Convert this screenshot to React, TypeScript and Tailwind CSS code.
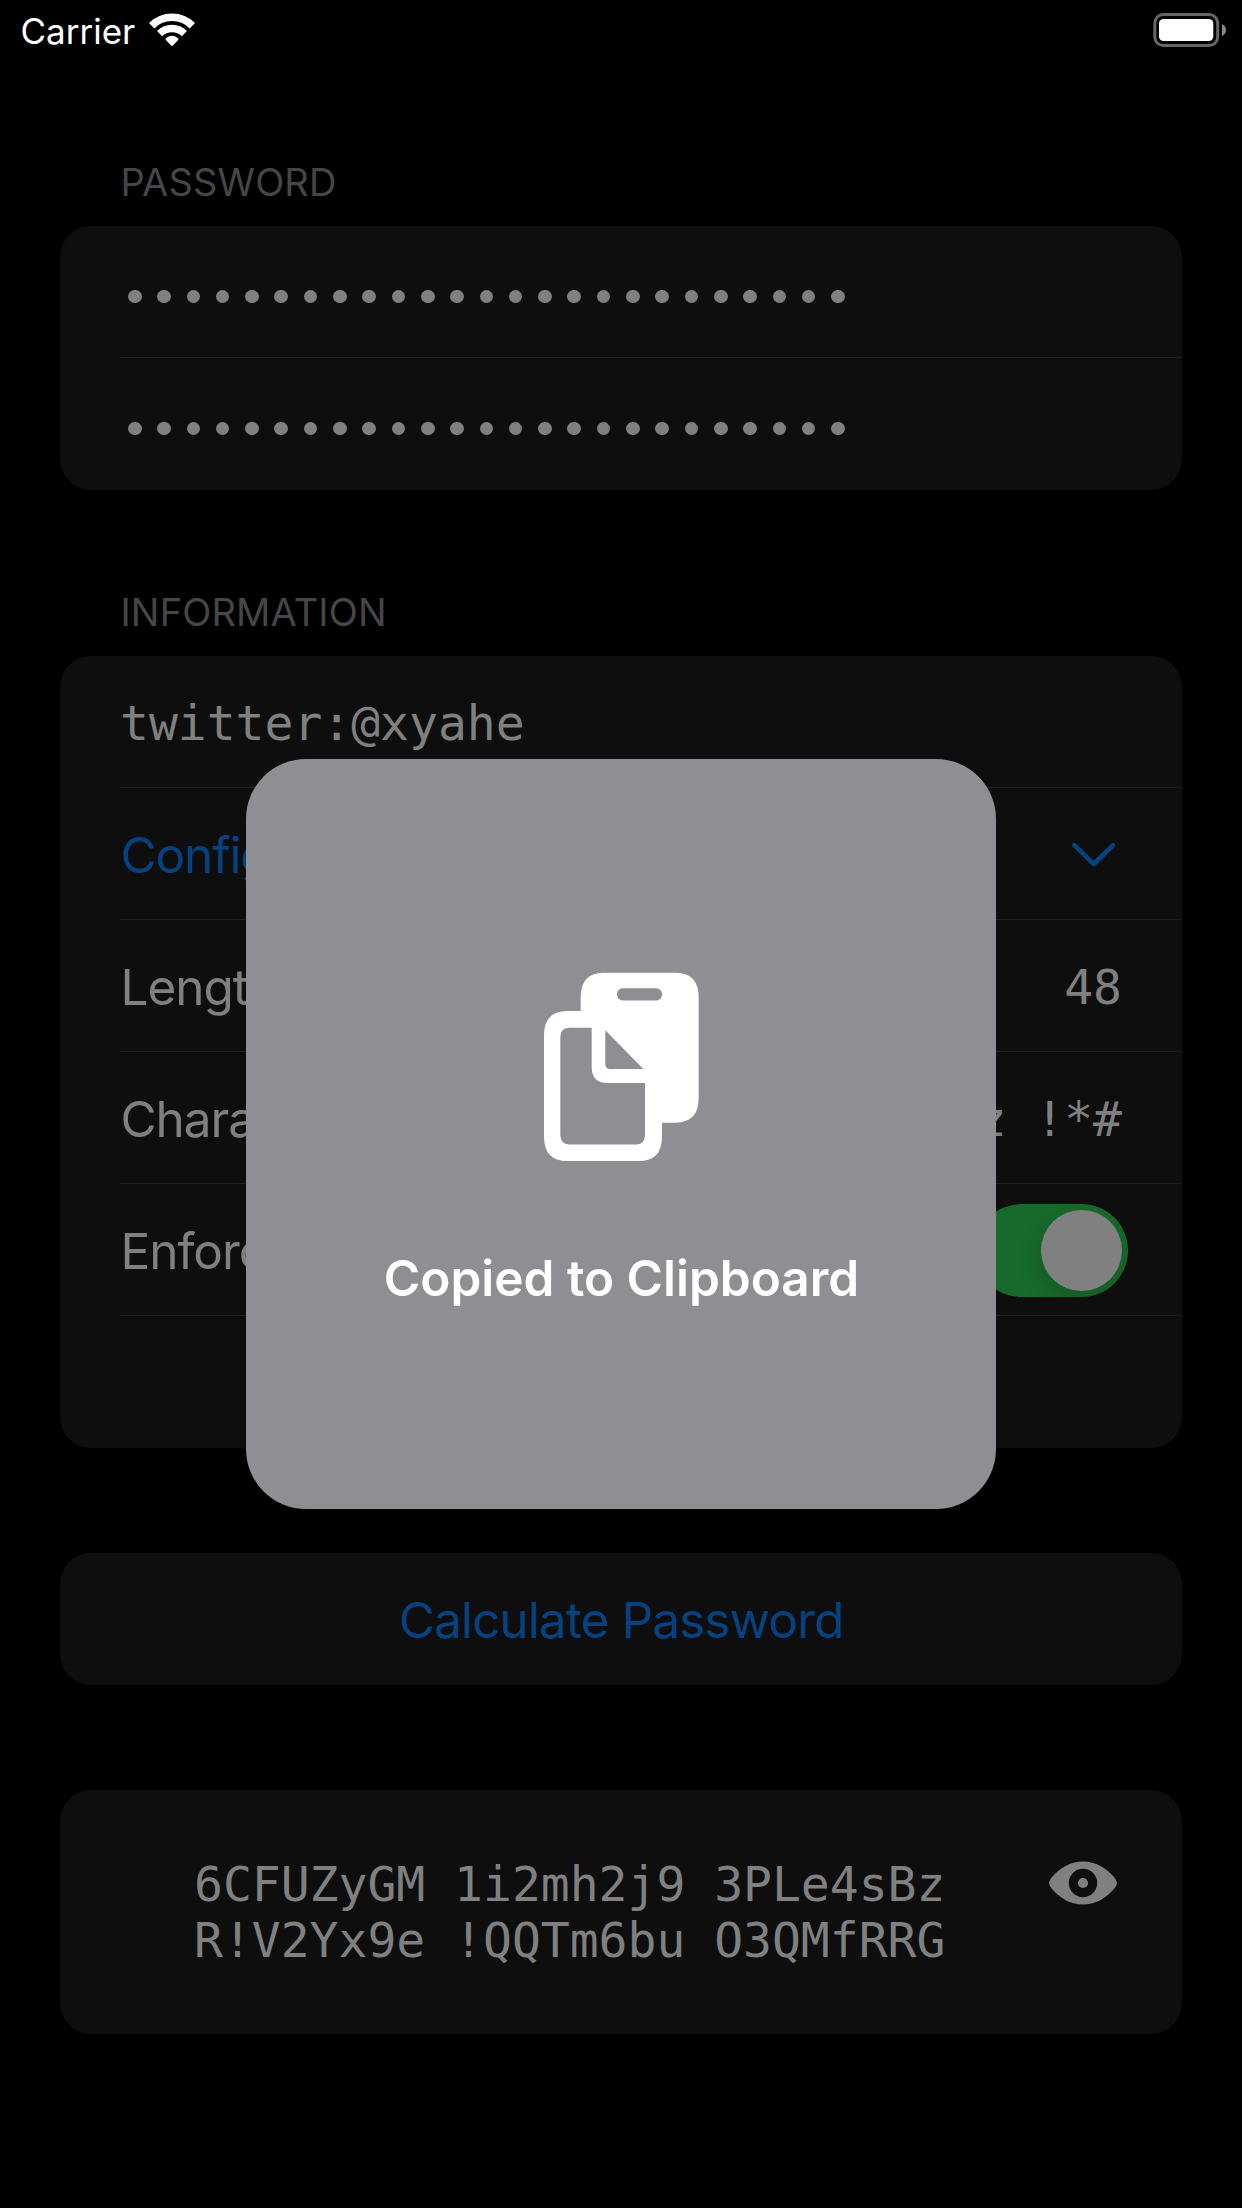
import type { ReactNode } from "react";

const DOTS = Array.from({ length: 25 }, (_, i) => i);

function StatusBar() {
  return (
    <header className="flex h-[60px] items-start justify-between pl-[20.500px] pr-4">
      <div className="flex items-start">
        <span className="mt-2.5 text-[35px] leading-[42px] text-white">Carrier</span>
        <svg className="ml-[12.800px] mt-[12px]" width="48" height="36" viewBox="444 36 144 108">
          <g fill="none" stroke="#fff">
            <path d="M455 77A86.500 86.500 0 0 1 577 77" strokeWidth="23" />
            <path d="M478.800 100.800A53 53 0 0 1 553.200 100.800" strokeWidth="22" />
          </g>
          <path d="M498 121Q494 117 499 114Q516 101 533 114Q538 117 534 121L518.500 136.500Q516 139 513.500 136.500Z" fill="#fff" />
        </svg>
      </div>
      <svg className="mt-[12px]" width="74" height="36" viewBox="1152 12 74 36">
        <rect x="1154.800" y="14.500" width="62.900" height="31" rx="8.500" fill="none" stroke="#666" strokeWidth="3" />
        <rect x="1159" y="19" width="54.300" height="22" rx="4.500" fill="#fff" />
        <path d="M1222 24Q1226 26 1226 30T1222 36Z" fill="#888" />
      </svg>
    </header>
  );
}

function Heading({ children }: { children: ReactNode }) {
  return (
    <h2 className="mb-[21px] ml-[60.500px] text-[38px] leading-[46px] font-normal tracking-[0.15px] text-[#464649]">
      {children}
    </h2>
  );
}

function Card({ children }: { children: ReactNode }) {
  return <section className="overflow-hidden rounded-[31px] bg-[#0e0e0e]">{children}</section>;
}

function Row({ children, last = false }: { children?: ReactNode; last?: boolean }) {
  return (
    <div className="pl-[60px]">
      <div
        className={
          last
            ? "flex h-[132px] items-start justify-between pr-[60px]"
            : "flex h-[132px] items-start justify-between border-b border-[#1f1f20] pr-[60px]"
        }
      >
        {children}
      </div>
    </div>
  );
}

function Label({ children, blue = false }: { children: ReactNode; blue?: boolean }) {
  return (
    <span
      className={
        blue
          ? "ml-[0.400px] mt-[38px] text-[49.500px] leading-[59px] tracking-[-1.1px] text-[#054281]"
          : "ml-[0.400px] mt-[38px] text-[49.500px] leading-[59px] tracking-[-1px] text-[#808080]"
      }
    >
      {children}
    </span>
  );
}

function Mono({ children }: { children: ReactNode }) {
  return (
    <span className="mt-[39px] font-['DejaVu_Sans_Mono',monospace] text-[48px] leading-[56px] whitespace-pre text-[#808080]">
      {children}
    </span>
  );
}

function SecureField() {
  return (
    <div className="ml-2 mt-[63.500px] flex w-[717px] justify-between">
      {DOTS.map((i) => (
        <span key={i} className="size-[13.600px] rounded-full bg-[#808080]" />
      ))}
    </div>
  );
}

function Toggle() {
  return (
    <div className="-mr-1.5 mt-5 flex h-[93px] w-[153px] items-center justify-end overflow-hidden rounded-full bg-[#18692c] p-1.5">
      <div className="size-[81px] rounded-full bg-[#808080] shadow-[0_9px_24px_rgba(0,0,0,0.15)]" />
    </div>
  );
}

function ClipboardIcon() {
  return (
    <svg className="mt-[213px]" width="156" height="190" viewBox="129 96 468 570">
      <path
        fill="#fff"
        d="M242 213V172Q242 98 312 98H526Q596 98 596 172V474Q596 548 526 548H486V590Q486 663 416 663H202Q132 663 132 590V286Q132 213 202 213Z"
      />
      <g fill="#8e8e93">
        <rect x="351" y="145" width="135" height="36.500" rx="17" />
        <path d="M210 263H275V381Q275 429 323 429H435V585Q435 613.500 407 613.500H210Q181 613.500 181 585V291Q181 263 210 263Z" />
        <path d="M316 271L430 387H330Q316 387 316 373Z" />
      </g>
    </svg>
  );
}

export default function App() {
  return (
    <div className="relative h-[2208px] w-[1242px] overflow-hidden bg-black font-['Inter',sans-serif]">
      <StatusBar />
      <main className="px-[60px] pt-[99px]">
        <Heading>PASSWORD</Heading>
        <Card>
          <Row>
            <SecureField />
          </Row>
          <Row last>
            <SecureField />
          </Row>
        </Card>

        <div className="mt-[99px]">
          <Heading>INFORMATION</Heading>
          <Card>
            <Row>
              <Mono>twitter:@xyahe</Mono>
            </Row>
            <Row>
              <Label blue>Configuration</Label>
              <svg className="mr-[4px] mt-[52px]" width="48" height="30" viewBox="1070 840 48 30">
                <path
                  d="M1074.300 845.200L1093.700 864L1113 845.200"
                  fill="none"
                  stroke="#054281"
                  strokeWidth="4.600"
                  strokeLinecap="round"
                  strokeLinejoin="round"
                />
              </svg>
            </Row>
            <Row>
              <Label>Length</Label>
              <Mono>48</Mono>
            </Row>
            <Row>
              <Label>Characters</Label>
              <Mono>a-z !*#</Mono>
            </Row>
            <Row>
              <Label>Enforce</Label>
              <Toggle />
            </Row>
            <Row last />
          </Card>
        </div>

        <div className="mt-[105px]">
          <Card>
            <div className="h-[132px] pt-[38px] text-center text-[49.500px] leading-[59px] tracking-[-0.9px] text-[#054281]">
              Calculate Password
            </div>
          </Card>
        </div>

        <div className="mt-[105px]">
          <Card>
            <div className="flex h-[244px] items-start justify-between pl-[134px] pr-[64px]">
              <p className="mt-[66px] font-['DejaVu_Sans_Mono',monospace] text-[48px] leading-[56px] whitespace-pre text-[#808080]">
                {"6CFUZyGM 1i2mh2j9 3PLe4sBz\nR!V2Yx9e !QQTm6bu O3QMfRRG"}
              </p>
              <svg className="mt-[70px]" width="70" height="46" viewBox="0 0 70 46">
                <path d="M1 23Q1 20.500 4 17C12 8 22 1.500 35 1.500S58 8 66 17Q69 20.500 69 23T66 29C58 38 48 44.500 35 44.500S12 38 4 29Q1 25.500 1 23Z" fill="#808080" />
                <circle cx="35" cy="23" r="14.200" fill="#0e0e0e" />
                <circle cx="35" cy="23" r="5.100" fill="#808080" />
              </svg>
            </div>
          </Card>
        </div>
      </main>

      <div className="absolute left-[246px] top-[759px] flex size-[750px] flex-col items-center rounded-[60px] bg-[#8e8e93]">
        <ClipboardIcon />
        <p className="mt-[87px] pl-px text-[49.500px] leading-[59px] font-semibold whitespace-nowrap text-white">
          Copied to Clipboard
        </p>
      </div>
    </div>
  );
}
